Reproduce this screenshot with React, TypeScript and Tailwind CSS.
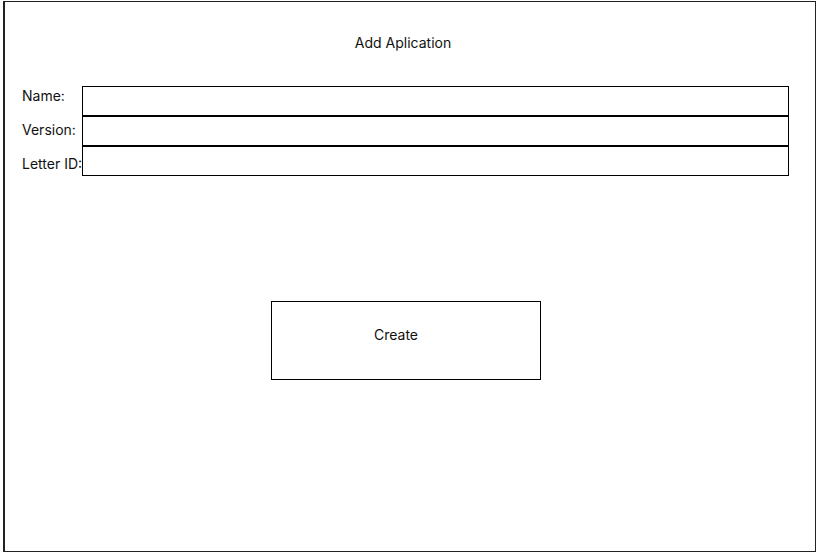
export default function App() {
  const labels = ["Name:", "Version:", "Letter ID:"];
  return (
    <div className="w-[820px] h-[556px] bg-white pl-[3px] pt-[1px] font-['Inter',sans-serif] text-sm text-[#111]">
      <div className="w-[813px] h-[551px] border border-[#222] border-l-2 flex flex-col">
        <div className="mt-[31px] h-5 leading-5 text-center pr-[14px]">Add Aplication</div>

        <div className="mt-[26px] flex pl-[17px]">
          <div className="w-[60px] flex flex-col">
            {labels.map((l) => (
              <div key={l} className="h-[34px] flex items-center whitespace-nowrap">
                {l}
              </div>
            ))}
          </div>
          <div className="mt-[7px] flex flex-col">
            {labels.map((l) => (
              <input key={l} className="w-[707px] h-[30px] border border-black bg-white outline-none px-1" />
            ))}
          </div>
        </div>

        <button className="ml-[266px] mt-[120px] w-[270px] h-[79px] border border-black bg-white pb-[12px] pr-[20px] text-sm">
          Create
        </button>
      </div>
    </div>
  );
}
